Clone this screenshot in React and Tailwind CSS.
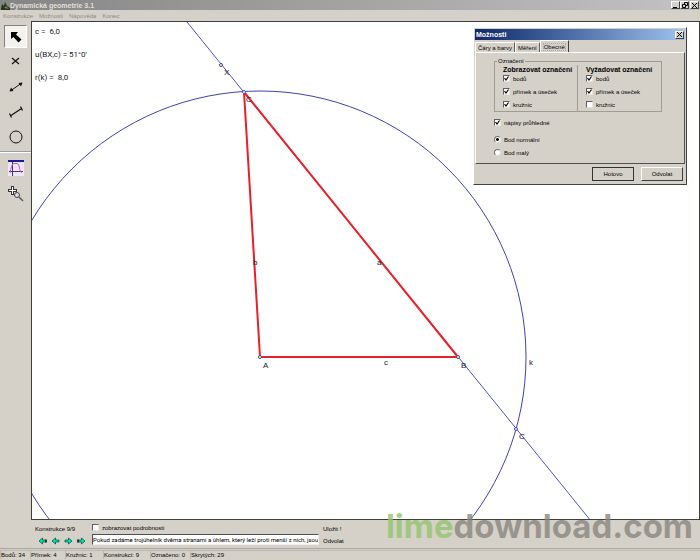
import { useState } from 'react'

const menus = ['Konstrukce', 'Možnosti', 'Nápověda', 'Konec']

const stats = [
  { text: 'Bodů: 34', width: 'w-[30px]' },
  { text: 'Přímek: 4', width: 'w-[35px]' },
  { text: 'Kružnic: 1', width: 'w-[38px]' },
  { text: 'Konstrukcí: 9', width: 'w-[47px]' },
  { text: 'Označeno: 0', width: 'w-[40px]' },
  { text: 'Skrytých: 29', width: 'flex-1' },
]

const raised = 'border border-t-white border-l-white border-r-[#404040] border-b-[#404040]'

function ToolIcon({ name }) {
  return (
    <svg width="18" height="18" viewBox="0 0 18 18" fill="none" stroke="#111" aria-hidden="true">
      {name === 'select' && <path d="M4 4h7l-2 2.500 5.500 5-3 3-5-5.500L4 11z" fill="#000" stroke="none" />}
      {name === 'point' && <path d="M5 5l7 6M12 5l-7 6" strokeWidth="1.200" />}
      {name === 'line' && <><path d="M4 12.500L14 5.500" /><path d="M2.500 13.500l1.500-4 2.500 3.500zM15.500 4.500l-4 .5 2.500 3.500z" fill="#111" stroke="none" /></>}
      {name === 'segment' && <path d="M4 12.500L14.500 5.500M2.500 10.500l2 4M13.500 3.500l2 4" strokeWidth="1.200" />}
      {name === 'circle' && <circle cx="9" cy="9" r="6" />}
      {name === 'graph' && (
        <>
          <path d="M1 1h16v16H1z" fill="#eee6f8" stroke="none" />
          <path d="M1 2h16" stroke="#1a1a9c" strokeWidth="2" />
          <path d="M2 12.500h14M5.500 3v14" stroke="#443377" />
          <path d="M3 14C4 9 5 4.500 7 4.500h3c3 0 2 9 5 9" stroke="#c060c0" />
        </>
      )}
      {name === 'zoom' && (
        <>
          <path d="M5.500 1v9M1 5.500h9" stroke="#333" strokeWidth="3" />
          <path d="M5.500 2v7M2 5.500h7" stroke="#fff" />
          <circle cx="10" cy="10" r="2.500" stroke="#445" fill="#ddd" />
          <path d="M12 12l4 4" stroke="#556" strokeWidth="1.500" />
        </>
      )}
    </svg>
  )
}

const tools = [
  { name: 'select', label: 'Výběr' },
  { name: 'point', label: 'Bod' },
  { name: 'line', label: 'Přímka' },
  { name: 'segment', label: 'Úsečka' },
  { name: 'circle', label: 'Kružnice' },
]

const extraTools = [
  { name: 'graph', label: 'Graf' },
  { name: 'zoom', label: 'Lupa' },
]

function Toolbar() {
  const [active, setActive] = useState('select')

  function button(t) {
    return (
      <button key={t.name} aria-label={t.label} onClick={() => setActive(t.name)}
        className={`w-[23px] h-[23px] flex items-center justify-center border ${active === t.name ? 'bg-[#f3f2ef] border-t-[#808080] border-l-[#808080] border-r-white border-b-white' : 'border-transparent'}`}>
        <ToolIcon name={t.name} />
      </button>
    )
  }

  return (
    <div className="w-[31px] shrink-0 flex flex-col items-center pt-1">
      <div className="flex flex-col gap-[2px] pb-[3px]">{tools.map(button)}</div>
      <div className="w-full border-t border-t-[#9c98b8] border-b border-b-white" />
      <div className="flex flex-col gap-[3px] pt-[3px]">{extraTools.map(button)}</div>
    </div>
  )
}

function Drawing() {
  return (
    <svg className="absolute inset-0 w-full h-full" fill="none" aria-label="Trojúhelník ABC">
      <g stroke="#4040b0">
        <circle cx="228" cy="335" r="266" />
        <path d="M155 0L559 499" stroke="#5050d0" />
      </g>
      <path d="M228 335H426L212 70z" stroke="#e8202a" strokeWidth="2" strokeLinejoin="round" />
      <g fill="#fff" stroke="#444466">
        <circle cx="189" cy="43" r="1.500" />
        <circle cx="212" cy="70" r="1.500" stroke="#5050d0" />
        <circle cx="228" cy="335" r="1.500" />
        <circle cx="426" cy="335" r="1.500" />
        <circle cx="484" cy="407" r="1.500" stroke="#4040d0" />
      </g>
      <g fill="#222" fontSize="8">
        <text x="192" y="53">X</text>
        <text x="214" y="80">C</text>
        <text x="221" y="243">b</text>
        <text x="345" y="243">a</text>
        <text x="231" y="346">A</text>
        <text x="352" y="343">c</text>
        <text x="429" y="346">B</text>
        <text x="497" y="343">k</text>
        <text x="487" y="417">C</text>
      </g>
    </svg>
  )
}

function Check({ label, checked = true }) {
  return (
    <label className="flex items-center gap-[3px] h-[7px] leading-none">
      <input type="checkbox" defaultChecked={checked} className="peer sr-only" />
      <span className="w-[7px] h-[7px] bg-white border border-t-[#606060] border-l-[#606060] border-r-[#e8e5df] border-b-[#e8e5df] peer-checked:[&>svg]:block">
        <svg viewBox="0 0 5 5" className="hidden w-[5px] h-[5px]"><path d="M0.500 2l1.500 2L4.500 0.500" fill="none" stroke="#000" strokeWidth="1.200" /></svg>
      </span>
      {label}
    </label>
  )
}

function Radio({ label, checked }) {
  return (
    <label className="flex items-center gap-[3px] h-[7px] leading-none">
      <input type="radio" name="bod" defaultChecked={checked} className="appearance-none w-[7px] h-[7px] rounded-full bg-white border border-t-[#707070] border-l-[#707070] border-r-[#e0ddd6] border-b-[#e0ddd6] checked:bg-[radial-gradient(#000_35%,#fff_45%)]" />
      {label}
    </label>
  )
}

function OptionsDialog({ onClose }) {
  return (
    <div role="dialog" aria-label="Možnosti"
      className={`absolute top-[5px] right-[12px] w-[214px] bg-[#d5d1c9] text-[6px] p-px ${raised}`}>
      <div className="h-[11px] flex items-center justify-between pl-px pr-px bg-gradient-to-r from-[#10296b] to-[#a0c4ee] text-white text-[7px] leading-none font-bold">
        <span>Možnosti</span>
        <button aria-label="Zavřít" onClick={onClose} className={`w-[9px] h-[8px] flex items-center justify-center bg-[#d5d1c9] ${raised}`}>
          <svg width="5" height="5" viewBox="0 0 5 5" stroke="#000" aria-hidden="true"><path d="M0 0l5 5M5 0L0 5" /></svg>
        </button>
      </div>
      <div role="tablist" className="flex items-end h-[12px]">
        <button role="tab" className="h-[10px] px-[2px] border-t border-l border-r border-t-white border-l-white border-r-[#606060] leading-none">Čáry a barvy</button>
        <button role="tab" className="h-[10px] px-[2px] border-t border-l border-r border-t-white border-l-white border-r-[#606060] leading-none">Měření</button>
        <button role="tab" aria-selected="true" className="h-[12px] px-[2px] bg-[#d5d1c9] border-t border-l border-r border-t-white border-l-white border-r-[#404040] leading-none"><span className="border border-dotted border-[#aaa]">Obecné</span></button>
      </div>
      <div className="h-[112px] border border-t-white border-l-white border-r-[#505050] border-b-[#505050] pl-[18px]">
        <fieldset className="mt-[5px] w-[168px] h-[54px] flex border border-[#a09c94]">
          <legend className="ml-[2px] px-px leading-none h-[7px]">Označení</legend>
          <div className="w-[83px] pl-[8px] pt-px border-r border-[#a09c94] flex flex-col">
            <b className="text-[7px] leading-[8px] whitespace-nowrap">Zobrazovat označení</b>
            <div className="flex flex-col gap-[6px] pt-px">
              <Check label="bodů" />
              <Check label="přímek a úseček" />
              <Check label="kružnic" />
            </div>
          </div>
          <div className="flex-1 pl-[8px] pt-px flex flex-col">
            <b className="text-[7px] leading-[8px] whitespace-nowrap">Vyžadovat označení</b>
            <div className="flex flex-col gap-[6px] pt-px">
              <Check label="bodů" />
              <Check label="přímek a úseček" />
              <Check label="kružnic" checked={false} />
            </div>
          </div>
        </fieldset>
        <div className="pt-[7px] flex flex-col">
          <Check label="nápisy průhledné" />
          <div className="pt-[10px] flex flex-col gap-[6px]">
            <Radio label="Bod normální" checked />
            <Radio label="Bod malý" />
          </div>
        </div>
      </div>
      <div className="h-[19px] flex items-center justify-end gap-[7px] pr-[2px]">
        <button onClick={onClose} className="w-[42px] h-[14px] border border-[#333] leading-none">Hotovo</button>
        <button onClick={onClose} className={`w-[42px] h-[14px] leading-none ${raised}`}>Odvolat</button>
      </div>
    </div>
  )
}

function StepButton({ label, left, bar }) {
  return (
    <button aria-label={label} className="w-[9px] h-[8px]">
      <svg width="9" height="8" viewBox="0 0 9 8" className={left ? '' : 'rotate-180'} aria-hidden="true">
        <path d="M1 4l3.500-3v2H8v2H4.500v2z" fill="#00e8a8" stroke="#044" strokeWidth="0.700" />
        {bar && <path d="M8 2.500v3" stroke="#022" strokeWidth="1.500" />}
      </svg>
    </button>
  )
}

function Watermark() {
  return (
    <div className="absolute right-[7px] bottom-[14px] text-[33px] leading-[40px] font-bold font-[Inter,sans-serif] opacity-80 pointer-events-none">
      <span className="text-[#94c56e]">lime</span><span className="text-[#8b8780]">download.com</span>
    </div>
  )
}

export default function App() {
  const [showOptions, setShowOptions] = useState(true)
  const [step, setStep] = useState('Pokud zadáme trojúhelník dvěma stranami a úhlem, který leží proti menší z nich, jsou')

  return (
    <div className="relative h-screen flex flex-col overflow-hidden bg-[#d5d1c9] text-black text-[6px] font-['Liberation_Sans',Arial,sans-serif]">
      <header className="h-[10px] shrink-0 flex items-center justify-between pl-px pr-px bg-gradient-to-r from-[#858585] to-[#c3c2c4] text-[#e2dfd9] text-[7px] leading-none font-bold">
        <div className="flex items-center">
          <svg width="9" height="9" viewBox="0 0 9 9" aria-hidden="true">
            <path d="M0 8l1-5 2 2 1-4 2 4 3 2v2H0z" fill="#25331c" />
            <path d="M3 7l2-2 3 3z" fill="#76804c" />
          </svg>
          <h1>Dynamická geometrie 3.1</h1>
        </div>
        <div className="flex">
          <button aria-label="Minimalizovat" className={`w-[9px] h-[8px] flex items-center justify-center bg-[#d5d1c9] ${raised}`}>
            <svg width="5" height="5" stroke="#000" aria-hidden="true"><path d="M0 4.500h4" /></svg>
          </button>
          <button aria-label="Obnovit" className={`w-[9px] h-[8px] flex items-center justify-center bg-[#d5d1c9] ${raised}`}>
            <svg width="6" height="6" fill="none" stroke="#000" aria-hidden="true"><path d="M2.500 2.500v-2h3v3h-2M0.500 2.500h3v3h-3z" /></svg>
          </button>
          <button aria-label="Zavřít program" className={`w-[9px] h-[8px] ml-px flex items-center justify-center bg-[#d5d1c9] ${raised}`}>
            <svg width="5" height="5" stroke="#000" aria-hidden="true"><path d="M0 0l5 5M5 0L0 5" /></svg>
          </button>
        </div>
      </header>

      <nav className="h-[11px] shrink-0 flex items-center gap-[6px] pl-[3px] text-[#8d8982] leading-none">
        {menus.map(m => <button key={m}>{m}</button>)}
      </nav>

      <div className="flex-1 min-h-0 flex">
        <Toolbar />
        <main className="relative flex-1 bg-white border border-[#404038] text-[8px]">
          <Drawing />
          <div className="relative w-fit pl-[3px] pt-[5px] flex flex-col gap-[14px] leading-[9px] whitespace-pre text-[#222] font-[Roboto,sans-serif]">
            <p>c =  6,0</p>
            <p>u(BX,c) = 51°0'</p>
            <p>r(k) =  8,0</p>
          </div>
          {showOptions && <OptionsDialog onClose={() => setShowOptions(false)} />}
        </main>
      </div>

      <section className="h-[29px] shrink-0 flex pl-[35px] border-b border-[#aaa69e] leading-none">
        <div className="w-[57px] pt-[6px] flex flex-col gap-[5px]">
          <span>Konstrukce 9/9</span>
          <div className="flex gap-[4px] pl-[3px]">
            <StepButton label="První krok" left bar />
            <StepButton label="Předchozí krok" left />
            <StepButton label="Další krok" />
            <StepButton label="Poslední krok" bar />
          </div>
        </div>
        <div className="w-[227px] pt-[4px] flex flex-col gap-[3px]">
          <Check label="zobrazovat podrobnosti" checked={false} />
          <input aria-label="Popis kroku" value={step} onChange={e => setStep(e.target.value)}
            className="w-full h-[11px] bg-white border border-t-[#505050] border-l-[#505050] border-r-[#eee] border-b-[#eee] text-[6px] leading-none font-[Roboto,sans-serif] outline-none" />
        </div>
        <div className="pl-[4px] pt-[6px] flex flex-col items-start gap-[6px]">
          <button>Uložit !</button>
          <button>Odvolat</button>
        </div>
      </section>

      <footer className="h-[11px] shrink-0 flex items-center leading-none">
        {stats.map(s => (
          <span key={s.text} className={`${s.width} h-[9px] pt-px shrink-0 border-l border-t border-t-[#bbb7af] border-l-[#bbb7af] whitespace-nowrap`}>{s.text}</span>
        ))}
      </footer>
      <Watermark />
    </div>
  )
}
